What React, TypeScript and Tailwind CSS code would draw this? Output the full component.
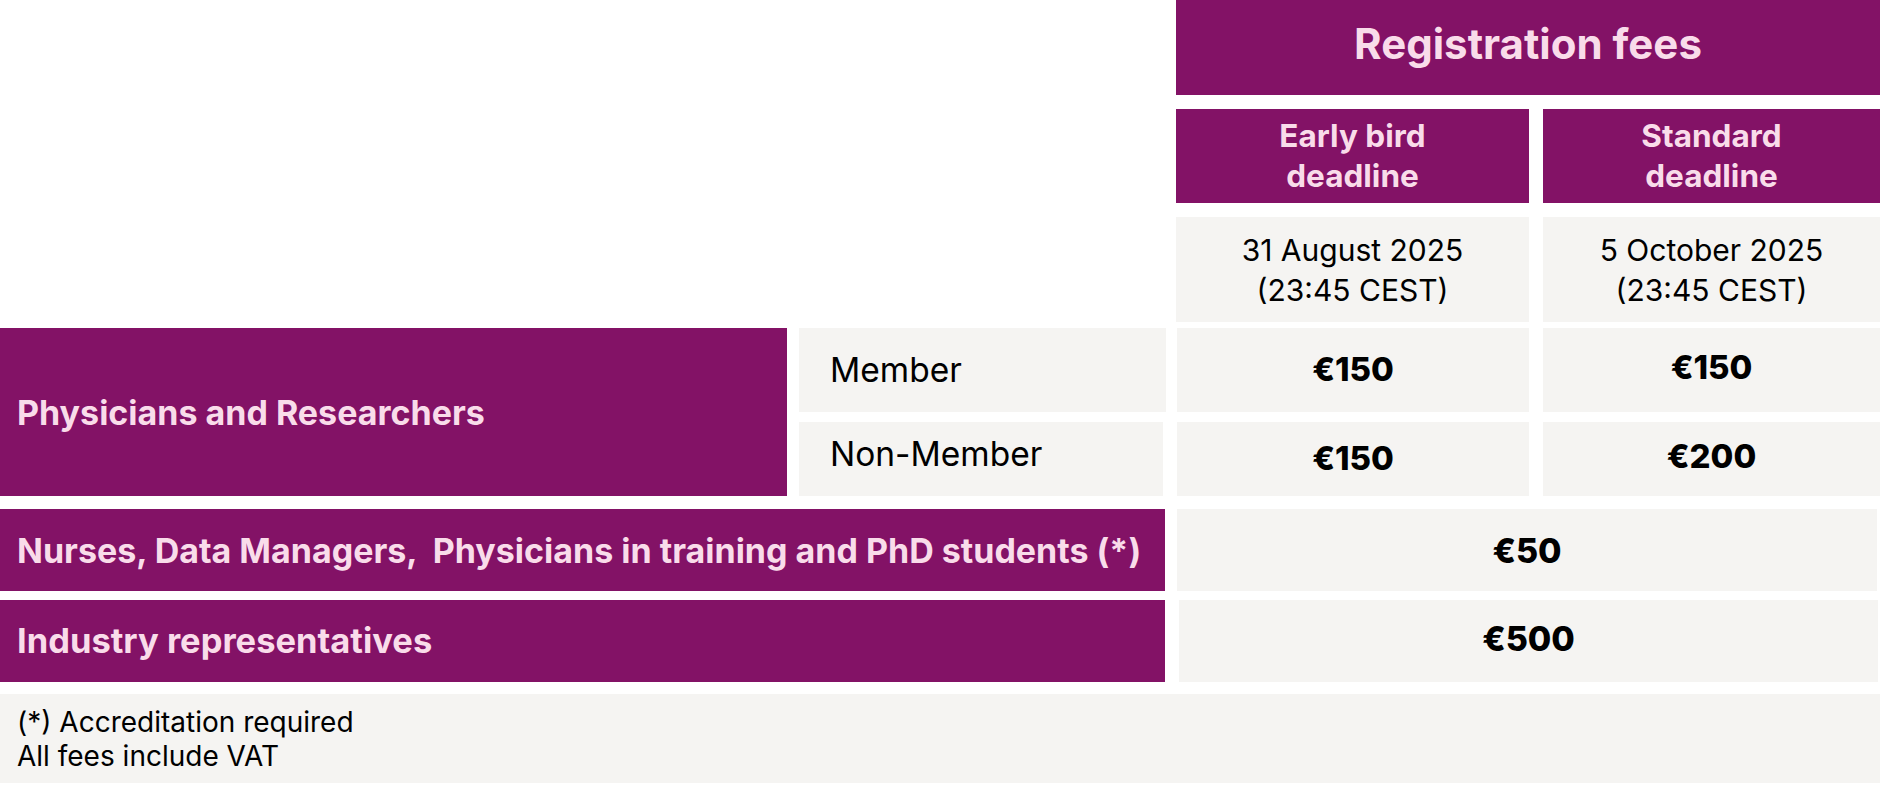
import React from "react";

const purple = "bg-[#831266] text-[#f9dcea]";
const gray = "bg-[#f5f4f2] text-black";

export default function App() {
  return (
    <div className="w-[1888px] h-[785px] bg-white flex flex-col font-['Inter','Liberation_Sans',sans-serif]">
      <div className="flex">
        <div className="w-[1176px] shrink-0" />
        <div className="w-[704px] flex flex-col">
          <div className={`${purple} h-[95px] flex items-center justify-center pb-[8px] text-[42px] font-bold`}>
            Registration fees
          </div>
          <div className="mt-[14px] flex gap-[14px]">
            <div className={`${purple} w-[353px] h-[94px] flex items-center justify-center text-center text-[31.5px] leading-[40px] font-bold`}>
              Early bird
              <br />
              deadline
            </div>
            <div className={`${purple} w-[337px] h-[94px] flex items-center justify-center text-center text-[31.5px] leading-[40px] font-bold`}>
              Standard
              <br />
              deadline
            </div>
          </div>
          <div className="mt-[14px] flex gap-[14px]">
            <div className={`${gray} w-[353px] h-[105px] flex items-center justify-center text-center text-[30px] leading-[40px]`}>
              31 August 2025
              <br />
              (23:45 CEST)
            </div>
            <div className={`${gray} w-[337px] h-[105px] flex items-center justify-center text-center text-[30px] leading-[40px]`}>
              5 October 2025
              <br />
              (23:45 CEST)
            </div>
          </div>
        </div>
      </div>

      <div className="mt-[6px] flex">
        <div className={`${purple} w-[787px] h-[168px] shrink-0 flex items-center pl-[17px] text-[34px] font-bold`}>
          Physicians and Researchers
        </div>
        <div className="ml-[12px] flex flex-col gap-[10px]">
          <div className="flex h-[84px]">
            <div className={`${gray} w-[367px] flex items-center pl-[31px] text-[33.5px]`}>Member</div>
            <div className={`${gray} ml-[11px] w-[352px] flex items-center justify-center text-[33px] font-extrabold`}>€150</div>
            <div className={`${gray} ml-[14px] w-[337px] flex items-center justify-center text-[33px] font-extrabold pb-[4px]`}>€150</div>
          </div>
          <div className="flex h-[74px]">
            <div className={`${gray} w-[364px] mr-[3px] flex items-center pl-[31px] pb-[10px] text-[33.5px]`}>Non-Member</div>
            <div className={`${gray} ml-[11px] w-[352px] flex items-center justify-center text-[33px] font-extrabold`}>€150</div>
            <div className={`${gray} ml-[14px] w-[337px] flex items-center justify-center text-[33px] font-extrabold pb-[5px]`}>€200</div>
          </div>
        </div>
      </div>

      <div className="mt-[13px] flex h-[82px]">
        <div className={`${purple} w-[1165px] shrink-0 flex items-center pl-[17px] text-[34px] font-bold whitespace-pre`}>
          {"Nurses, Data Managers,  Physicians in training and PhD students (*)"}
        </div>
        <div className={`${gray} ml-[12px] w-[700px] flex items-center justify-center text-[34px] font-extrabold`}>€50</div>
      </div>

      <div className="mt-[9px] flex h-[82px]">
        <div className={`${purple} w-[1165px] shrink-0 flex items-center pl-[17px] text-[34.5px] font-bold`}>
          Industry representatives
        </div>
        <div className={`${gray} ml-[14px] w-[699px] flex items-center justify-center pb-[6px] text-[34px] font-extrabold`}>€500</div>
      </div>

      <div className={`${gray} mt-[12px] w-[1880px] h-[89px] flex flex-col justify-center pl-[17px] text-[28px] leading-[34px]`}>
        <div>(*) Accreditation required</div>
        <div>All fees include VAT</div>
      </div>
    </div>
  );
}
